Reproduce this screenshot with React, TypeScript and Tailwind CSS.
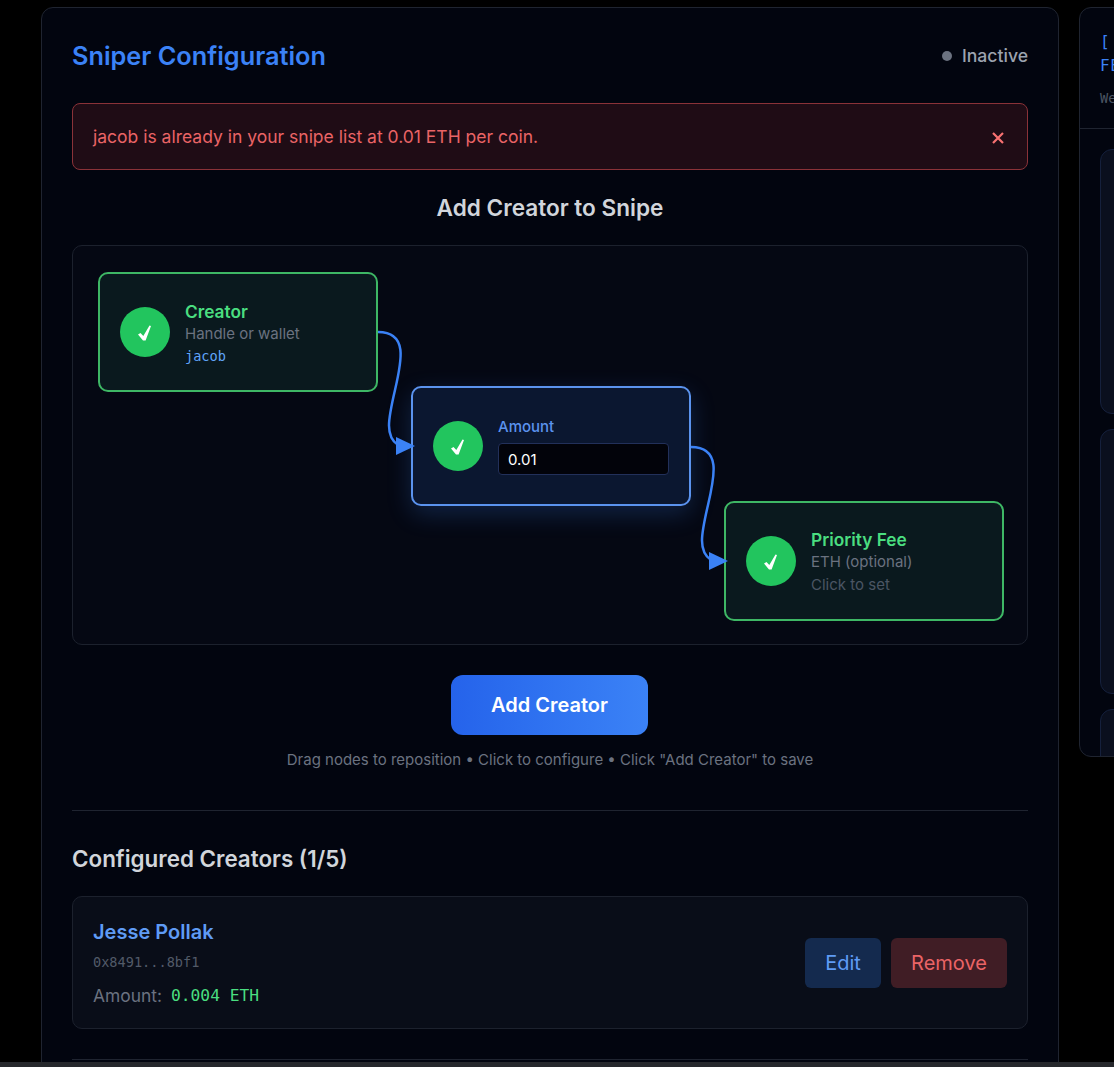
import React from 'react';

const Check: React.FC = () => (
  <div className="flex h-[50px] w-[50px] shrink-0 items-center justify-center rounded-full bg-[#22c55e]">
    <svg width="50" height="50" viewBox="0 0 50 50" fill="#ffffff">
      <path d="M18 27.5L20.5 26L23.3 29L29.5 18.5L31 19L25.6 33.5L23 33.5Z" />
    </svg>
  </div>
);

const SIDE_CARDS = ['h-[265px]', 'h-[265px]', 'h-[265px]'];

const App: React.FC = () => {
  return (
    <div className="flex h-[1067px] w-[1114px] flex-col overflow-hidden bg-black font-['Inter',sans-serif]">
      <div className="flex min-h-0 flex-1 items-start gap-5 overflow-hidden pl-[41px] pt-[7px]">
        <main className="w-[1018px] shrink-0 rounded-t-xl border border-[#1f2430] bg-[#02050f] px-[30px] pt-[30px] pb-10">
          <div className="flex h-[36px] items-center justify-between">
            <h1 className="text-[25.3px] font-semibold text-[#3b82f6]">Sniper Configuration</h1>
            <div className="flex items-center gap-2.5 text-[17.6px] font-medium text-[#9ca3af]">
              <span className="h-2.5 w-2.5 rounded-full bg-[#6b7280]" />
              Inactive
            </div>
          </div>

          <div className="mt-[29px] flex h-[67px] items-center justify-between rounded-lg border border-[#8a3238] bg-[#1f0c15] px-5 text-[17.5px] text-[#ea6466]">
            <span className="pt-0.5">jacob is already in your snipe list at 0.01 ETH per coin.</span>
            <svg width="12" height="12" viewBox="0 0 12 12" className="mt-0.5 mr-[3px]" fill="none" stroke="#f87171" strokeWidth="2.2">
              <path d="M1 1l10 10M11 1L1 11" />
            </svg>
          </div>

          <h2 className="mt-6 text-center text-[22.6px] leading-[28px] font-semibold text-[#d1d5db]">Add Creator to Snipe</h2>

          <div className="relative mt-[23px] h-[400px] rounded-[10px] border border-[#1c212d] bg-[#050813]">
            <div className="absolute top-[26px] left-[25px] flex h-[120px] w-[280px] items-center gap-[15px] rounded-[10px] border-2 border-[#3eb765] bg-[#0a191e] px-5">
              <Check />
              <div className="pt-1">
                <div className="text-[17.3px] leading-[22px] font-semibold text-[#4ade80]">Creator</div>
                <div className="text-[15px] leading-[22px] text-[#6b7280]">Handle or wallet</div>
                <div className="font-['DejaVu_Sans_Mono',monospace] text-[13.6px] leading-[22px] text-[#60a5fa]">jacob</div>
              </div>
            </div>

            <div className="absolute top-[140px] left-[338px] flex h-[120px] w-[280px] items-center gap-[15px] rounded-[10px] border-2 border-[#5b93ee] bg-[#0b1730] px-5 shadow-[0_8px_24px_rgba(59,130,246,0.22)]">
              <Check />
              <div className="flex-1">
                <div className="text-[15px] leading-[20px] font-medium text-[#5b93ee]">Amount</div>
                <input
                  readOnly
                  value="0.01"
                  className="mt-1.5 h-8 w-full rounded border border-[#22305a] bg-[#02030a] px-[9px] text-[15px] text-white outline-none"
                />
              </div>
            </div>

            <div className="absolute top-[255px] left-[651px] flex h-[120px] w-[280px] items-center gap-[15px] rounded-[10px] border-2 border-[#3eb765] bg-[#0a191e] px-5">
              <Check />
              <div className="pt-1">
                <div className="text-[17.3px] leading-[22px] font-semibold text-[#4ade80]">Priority Fee</div>
                <div className="text-[15px] leading-[22px] text-[#6b7280]">ETH (optional)</div>
                <div className="text-[15px] leading-[24px] text-[#4b5563]">Click to set</div>
              </div>
            </div>

            <svg className="absolute top-[-1px] left-[-1px] overflow-visible" width="956" height="400" fill="none">
              <path d="M306 87C336 87 330 115 323 145C316 175 313 191 326 200" stroke="#3b82f6" strokeWidth="2.5" />
              <polygon points="324,192 324,210 343,201" fill="#3b82f6" />
              <path d="M619 202C649 202 643 230 636 260C629 290 626 306 639 315" stroke="#3b82f6" strokeWidth="2.5" />
              <polygon points="637,307 637,325 656,316" fill="#3b82f6" />
            </svg>
          </div>

          <div className="mt-[30px] flex justify-center pr-px">
            <button className="h-[60px] w-[197px] rounded-xl bg-linear-to-r from-[#2563eb] to-[#3b82f6] text-[20px] font-semibold text-white">
              Add Creator
            </button>
          </div>
          <p className="mt-[15px] text-center text-[15px] leading-[20px] text-[#6b7280]">
            Drag nodes to reposition • Click to configure • Click "Add Creator" to save
          </p>

          <div className="mt-10 border-t border-[#1f2430] pt-[34px]">
            <h2 className="text-[22.4px] leading-[28px] font-semibold text-[#d1d5db]">Configured Creators (1/5)</h2>
            <div className="mt-[23px] flex h-[133px] items-center justify-between rounded-[10px] border border-[#1c212d] bg-[#090d18] px-5">
              <div className="pt-[2px]">
                <div className="text-[20px] leading-[28px] font-semibold text-[#5f9bf5]">Jesse Pollak</div>
                <div className="mt-[6px] font-['DejaVu_Sans_Mono',monospace] text-[13.6px] leading-[20px] text-[#525a68]">0x8491...8bf1</div>
                <div className="mt-[11px] flex items-center gap-[9px] text-[17.4px] leading-[26px] text-[#6b7280]">
                  Amount:
                  <span className="font-['DejaVu_Sans_Mono',monospace] text-[16.3px] text-[#4ade80]">0.004 ETH</span>
                </div>
              </div>
              <div className="flex gap-2.5">
                <button className="h-[50px] w-[76px] rounded-md bg-[#142a4e] text-[20px] text-[#5f9bf5]">Edit</button>
                <button className="h-[50px] w-[116px] rounded-md bg-[#401d25] text-[20px] text-[#ea6466]">Remove</button>
              </div>
            </div>
            <div className="mt-[30px] border-t border-[#1f2430]" />
          </div>
        </main>

        <aside className="h-[750px] w-[300px] shrink-0 overflow-hidden rounded-xl border border-[#1f2430] bg-[#02050f]">
          <div className="h-[121px] border-b border-[#1f2430] px-5 pt-[22px] font-['DejaVu_Sans_Mono',monospace]">
            <div className="text-[16px] leading-[24px] text-[#3b82f6]">[</div>
            <div className="text-[16px] leading-[24px] tracking-[0.5px] text-[#3b82f6]">FE</div>
            <div className="mt-[10px] text-[13.6px] leading-[20px] text-[#4b5563]">We</div>
          </div>
          <div className="flex flex-col gap-[15px] px-5 pt-5">
            {SIDE_CARDS.map((h, i) => (
              <div key={i} className={`${h} shrink-0 rounded-xl border border-[#15203c] bg-[#0a0f1e]`} />
            ))}
          </div>
        </aside>
      </div>
      <div className="h-[5px] shrink-0 bg-[#26282c]" />
    </div>
  );
};

export default App;
